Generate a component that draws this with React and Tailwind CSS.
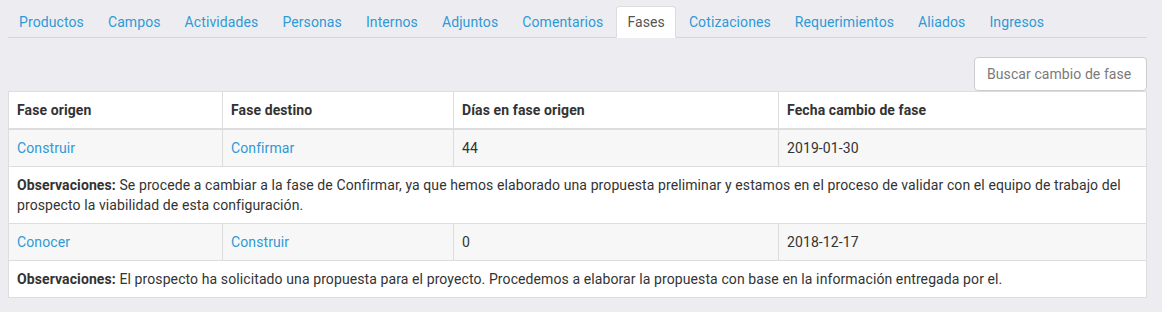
const tabs = ['Productos', 'Campos', 'Actividades', 'Personas', 'Internos', 'Adjuntos', 'Comentarios', 'Fases', 'Cotizaciones', 'Requerimientos', 'Aliados', 'Ingresos']

const rows = [
  {
    origen: 'Construir',
    destino: 'Confirmar',
    dias: '44',
    fecha: '2019-01-30',
    obs: 'Se procede a cambiar a la fase de Confirmar, ya que hemos elaborado una propuesta preliminar y estamos en el proceso de validar con el equipo de trabajo del prospecto la viabilidad de esta configuración.',
  },
  {
    origen: 'Conocer',
    destino: 'Construir',
    dias: '0',
    fecha: '2018-12-17',
    obs: 'El prospecto ha solicitado una propuesta para el proyecto. Procedemos a elaborar la propuesta con base en la información entregada por el.',
  },
]

export default function App() {
  return (
    <div className="w-[1162px] h-[312px] bg-[#ededf1] pt-[6px] font-['Roboto',sans-serif] text-[14px] leading-[20px] tracking-[0.1px] text-[#333]">
      <div className="ml-2 w-[1139px]">
        <ul className="flex border-b border-[#d6d6da]">
          {tabs.map((t) =>
            t === 'Fases' ? (
              <li key={t} className="mr-[2px] -mb-px h-[32px] px-[10px] flex items-center rounded-t-[4px] border border-[#dcdce0] border-b-white bg-white text-[#555]">
                {t}
              </li>
            ) : (
              <li key={t} className="mr-[2px] h-[31px] px-[11px] flex items-center text-[#2e9ad6]">
                {t}
              </li>
            )
          )}
        </ul>

        <div className="flex justify-end mt-[19px]">
          <input
            type="text"
            placeholder="Buscar cambio de fase"
            className="w-[173px] h-[34px] px-3 rounded-[4px] border border-[#ccc] bg-white text-[14px] tracking-[0.08px] placeholder:text-[#7a7a7a] outline-none"
          />
        </div>

        <table className="w-full border-collapse bg-white border border-[#ddd] table-fixed">
          <colgroup>
            <col className="w-[214px]" />
            <col className="w-[231px]" />
            <col className="w-[325px]" />
            <col />
          </colgroup>
          <thead>
            <tr className="border-b-2 border-[#ddd]">
              <th className="text-left font-bold p-2 border-r border-[#ddd]">Fase origen</th>
              <th className="text-left font-bold p-2 border-r border-[#ddd]">Fase destino</th>
              <th className="text-left font-bold p-2 border-r border-[#ddd]">Días en fase origen</th>
              <th className="text-left font-bold p-2">Fecha cambio de fase</th>
            </tr>
          </thead>
          <tbody>
            {rows.map((r) => (
              <>
                <tr key={r.fecha} className="bg-[#f7f7f7] border-t border-[#ddd]">
                  <td className="px-2 py-2 border-r border-[#ddd] text-[#2e9ad6]">{r.origen}</td>
                  <td className="px-2 py-2 border-r border-[#ddd] text-[#2e9ad6]">{r.destino}</td>
                  <td className="px-2 py-2 border-r border-[#ddd]">{r.dias}</td>
                  <td className="px-2 py-2">{r.fecha}</td>
                </tr>
                <tr key={r.fecha + 'o'} className="border-t border-[#ddd]">
                  <td colSpan={4} className="px-2 py-2">
                    <b>Observaciones:</b> {r.obs}
                  </td>
                </tr>
              </>
            ))}
          </tbody>
        </table>
      </div>
    </div>
  )
}
